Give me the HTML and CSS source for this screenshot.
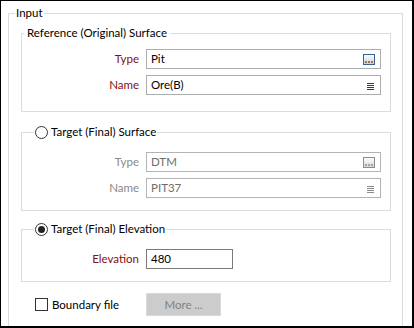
FILE: index.html
```html
<!DOCTYPE html>
<html>
<head>
<meta charset="utf-8">
<link rel="stylesheet" href="styles.css">
</head>
<body>
<div class="frame">
  <fieldset class="grp grp-input">
    <legend class="lg lg-input">Input</legend>

    <fieldset class="grp grp-sub grp-ref">
      <legend class="lg lg-ref">Reference (Original) Surface</legend>
      <div class="rows">
        <label class="lbl">Type</label>
        <div class="field">
          <span class="val">Pit</span>
          <svg class="ico-ell" width="12" height="11" viewBox="0 0 12 11">
            <defs>
              <linearGradient id="g1" x1="0" y1="0" x2="0" y2="1">
                <stop offset="0" stop-color="#ffffff"/>
                <stop offset="1" stop-color="#bcd2ee"/>
              </linearGradient>
            </defs>
            <rect x="0.5" y="0.5" width="11" height="10" fill="url(#g1)" stroke="#3d5f8c"/>
            <rect x="2" y="7" width="2" height="2" fill="#b3712a"/>
            <rect x="5" y="7" width="2" height="2" fill="#b3712a"/>
            <rect x="8" y="7" width="2" height="2" fill="#b3712a"/>
          </svg>
        </div>
        <label class="lbl">Name</label>
        <div class="field">
          <span class="val">Ore(B)</span>
          <svg class="ico-menu" width="7" height="7" viewBox="0 0 7 7">
            <rect x="0" y="0" width="7" height="1" fill="#3a3a3a"/>
            <rect x="0" y="2" width="7" height="1" fill="#3a3a3a"/>
            <rect x="0" y="4" width="7" height="1" fill="#3a3a3a"/>
            <rect x="0" y="6" width="7" height="1" fill="#3a3a3a"/>
          </svg>
        </div>
      </div>
    </fieldset>

    <fieldset class="grp grp-sub grp-tgt">
      <legend class="lg lg-radio"><span class="radio"></span><span>Target (Final) Surface</span></legend>
      <div class="rows disabled">
        <label class="lbl">Type</label>
        <div class="field">
          <span class="val">DTM</span>
          <svg class="ico-ell" width="12" height="11" viewBox="0 0 12 11">
            <defs>
              <linearGradient id="g2" x1="0" y1="0" x2="0" y2="1">
                <stop offset="0" stop-color="#ffffff"/>
                <stop offset="1" stop-color="#d6d6d6"/>
              </linearGradient>
            </defs>
            <rect x="0.5" y="0.5" width="11" height="10" fill="url(#g2)" stroke="#8c8c8c"/>
            <rect x="2" y="7" width="2" height="2" fill="#a3a3a3"/>
            <rect x="5" y="7" width="2" height="2" fill="#a3a3a3"/>
            <rect x="8" y="7" width="2" height="2" fill="#a3a3a3"/>
          </svg>
        </div>
        <label class="lbl">Name</label>
        <div class="field">
          <span class="val">PIT37</span>
          <svg class="ico-menu" width="7" height="7" viewBox="0 0 7 7">
            <rect x="0" y="0" width="7" height="1" fill="#8a8a8a"/>
            <rect x="0" y="2" width="7" height="1" fill="#8a8a8a"/>
            <rect x="0" y="4" width="7" height="1" fill="#8a8a8a"/>
            <rect x="0" y="6" width="7" height="1" fill="#8a8a8a"/>
          </svg>
        </div>
      </div>
    </fieldset>

    <fieldset class="grp grp-sub grp-elev">
      <legend class="lg lg-radio"><span class="radio checked"></span><span>Target (Final) Elevation</span></legend>
      <div class="rows">
        <label class="lbl">Elevation</label>
        <div class="field field-elev">
          <span class="val">480</span>
        </div>
      </div>
    </fieldset>

    <div class="bottom-row">
      <label class="chk-label"><span class="chk"></span><span>Boundary file</span></label>
      <div class="btn">More ...</div>
    </div>
  </fieldset>
</div>
</body>
</html>
```
FILE: styles.css
```css
html, body {
  margin: 0;
  padding: 0;
  background: #ffffff;
}
body {
  font-family: "Lato", "Noto Sans", sans-serif;
  font-size: 11.5px;
  color: #000;
}
.frame {
  width: 414px;
  height: 328px;
  box-sizing: border-box;
  border-style: solid;
  border-color: #000;
  border-width: 1px 2px 2px 1px;
  overflow: hidden;
  background: #fff;
}
.grp {
  margin: 0;
  padding: 0;
  border: 1px solid #dcdcdc;
  min-width: 0;
}
.lg {
  padding: 0 1px;
  line-height: 16px;
  height: 16px;
}
.grp-input {
  margin: 4px 9px 0 7px;
  height: 400px;
  border-bottom: none;
}
.lg-input {
  margin-left: 6px;
  padding: 0 1px;
}
.grp-sub {
  margin: 0 11px 0 12px;
}
.grp-ref {
  margin-top: 4px;
  padding: 8px 9px 16px 0;
}
.lg-ref {
  margin-left: 2px;
  padding: 0 3px;
}
.grp-tgt {
  margin-top: 12px;
  padding: 12px 9px 12px 0;
}
.grp-elev {
  margin-top: 10px;
  padding: 12px 9px 12px 0;
}
.lg-radio {
  margin-left: 12px;
  padding: 0 1px;
  display: flex;
  align-items: center;
  gap: 3px;
}
.radio {
  width: 13px;
  height: 13px;
  box-sizing: border-box;
  border: 1px solid #333;
  border-radius: 50%;
  display: inline-flex;
  align-items: center;
  justify-content: center;
}
.radio.checked::after {
  content: "";
  width: 7px;
  height: 7px;
  border-radius: 50%;
  background: #222;
}
.rows {
  display: grid;
  grid-template-columns: 1fr 235px;
  column-gap: 7px;
  row-gap: 6px;
  align-items: center;
}
.lbl {
  text-align: right;
  color: #7f1010;
  line-height: 20px;
}
.field {
  height: 20px;
  box-sizing: border-box;
  border: 1px solid #acadb1;
  display: flex;
  align-items: center;
  padding: 0 5px 0 4px;
}
.val {
  flex: 1;
  line-height: 18px;
}
.ico-ell {
  display: block;
  margin-top: 1px;
}
.ico-menu {
  display: block;
  margin-right: 1px;
  margin-top: 3px;
}
.disabled .lbl {
  color: #8a8a8a;
}
.disabled .field {
  border-color: #b4b4b4;
}
.disabled .val {
  color: #6d6d6d;
}
.field-elev {
  width: 87px;
  border-color: #7a7a7a;
}
.bottom-row {
  display: flex;
  align-items: center;
  margin-top: 11px;
  padding-left: 26px;
  height: 23px;
}
.chk-label {
  width: 111px;
  display: flex;
  align-items: center;
  gap: 4px;
}
.chk {
  width: 13px;
  height: 13px;
  box-sizing: border-box;
  border: 1px solid #333;
  display: inline-block;
}
.btn {
  width: 75px;
  height: 23px;
  box-sizing: border-box;
  border: 1px solid #dadada;
  background: #cccccc;
  color: #838383;
  display: flex;
  align-items: center;
  justify-content: center;
}
```
